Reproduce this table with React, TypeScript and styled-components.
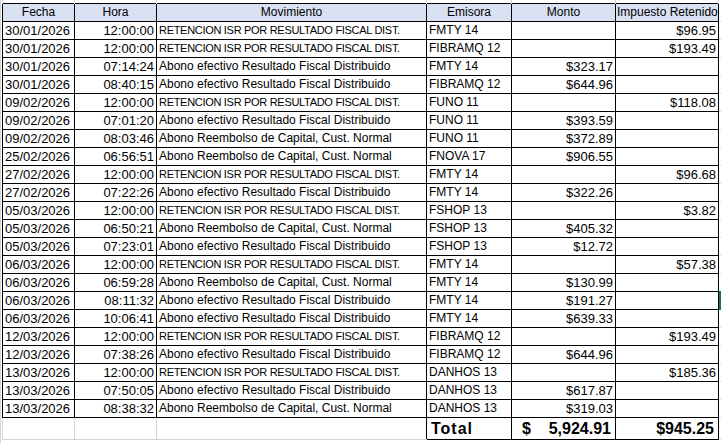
import React from "react";
import styled, { createGlobalStyle } from "styled-components";

const Global = createGlobalStyle`
  html, body { margin: 0; padding: 0; background: #ffffff; }
  body { font-family: "Liberation Sans", Arial, sans-serif; color: #000; }
`;

const Wrapper = styled.div`
  width: 721px;
  height: 443px;
  overflow: hidden;
  border-left: 1px solid #d4d4d4;
  padding-left: 1px;
  box-sizing: border-box;
`;

const Sheet = styled.table`
  border-collapse: collapse;
  table-layout: fixed;
  width: 800px;
`;

const SpacerCell = styled.td`
  height: 3px;
  padding: 0;
  font-size: 0;
  line-height: 0;
  border-left: 1px solid #d4d4d4;
  border-right: 1px solid #d4d4d4;
`;

const HeadCell = styled.th`
  height: 17px;
  padding: 0 1px;
  background: #d9e1f2;
  border: 1px solid #000;
  font-weight: normal;
  font-size: 12px;
  text-align: center;
  white-space: nowrap;
  overflow: hidden;
  line-height: 17px;
`;

const Cell = styled.td<{ $align?: "left" | "right"; $size?: number; $caps?: boolean }>`
  height: 17px;
  padding: 0 2px;
  border: 1px solid #000;
  font-size: ${(p) => (p.$caps ? 11 : p.$size ?? 12)}px;
  letter-spacing: ${(p) => (p.$caps ? "-0.3px" : "normal")};
  text-align: ${(p) => p.$align ?? "left"};
  white-space: nowrap;
  overflow: hidden;
  line-height: 17px;
`;

const BlankCell = styled.td<{ $noRight?: boolean }>`
  height: 21px;
  padding: 0;
  border-left: 1px solid #d4d4d4;
  border-bottom: 1px solid #d4d4d4;
  border-right: ${(p) => (p.$noRight ? "none" : "1px solid #d4d4d4")};
`;

const OuterCell = styled.td`
  padding: 0;
  border-top: none;
  border-bottom: 1px solid #d4d4d4;
  position: relative;
`;

const TotalCell = styled.td<{ $align?: "left" | "right"; $spaced?: boolean }>`
  height: 21px;
  padding: 0 4px;
  border: 1px solid #000;
  font-size: 16px;
  font-weight: bold;
  letter-spacing: ${(p) => (p.$spaced ? "1px" : "normal")};
  text-align: ${(p) => p.$align ?? "left"};
  white-space: nowrap;
  line-height: 21px;
`;

const Accounting = styled.div`
  display: flex;
  justify-content: space-between;
  padding-left: 6px;
`;

const Selection = styled.div`
  position: absolute;
  left: 0;
  top: -1px;
  bottom: -1px;
  width: 2px;
  background: #217346;
`;

type Row = [string, string, string, string, string, string];

const RET = "RETENCION ISR POR RESULTADO FISCAL DIST.";
const EFE = "Abono efectivo Resultado Fiscal Distribuido";
const REE = "Abono Reembolso de Capital, Cust. Normal";

const rows: Row[] = [
  ["30/01/2026", "12:00:00", RET, "FMTY 14", "", "$96.95"],
  ["30/01/2026", "12:00:00", RET, "FIBRAMQ 12", "", "$193.49"],
  ["30/01/2026", "07:14:24", EFE, "FMTY 14", "$323.17", ""],
  ["30/01/2026", "08:40:15", EFE, "FIBRAMQ 12", "$644.96", ""],
  ["09/02/2026", "12:00:00", RET, "FUNO 11", "", "$118.08"],
  ["09/02/2026", "07:01:20", EFE, "FUNO 11", "$393.59", ""],
  ["09/02/2026", "08:03:46", REE, "FUNO 11", "$372.89", ""],
  ["25/02/2026", "06:56:51", REE, "FNOVA 17", "$906.55", ""],
  ["27/02/2026", "12:00:00", RET, "FMTY 14", "", "$96.68"],
  ["27/02/2026", "07:22:26", EFE, "FMTY 14", "$322.26", ""],
  ["05/03/2026", "12:00:00", RET, "FSHOP 13", "", "$3.82"],
  ["05/03/2026", "06:50:21", REE, "FSHOP 13", "$405.32", ""],
  ["05/03/2026", "07:23:01", EFE, "FSHOP 13", "$12.72", ""],
  ["06/03/2026", "12:00:00", RET, "FMTY 14", "", "$57.38"],
  ["06/03/2026", "06:59:28", REE, "FMTY 14", "$130.99", ""],
  ["06/03/2026", "08:11:32", EFE, "FMTY 14", "$191.27", ""],
  ["06/03/2026", "10:06:41", EFE, "FMTY 14", "$639.33", ""],
  ["12/03/2026", "12:00:00", RET, "FIBRAMQ 12", "", "$193.49"],
  ["12/03/2026", "07:38:26", EFE, "FIBRAMQ 12", "$644.96", ""],
  ["13/03/2026", "12:00:00", RET, "DANHOS 13", "", "$185.36"],
  ["13/03/2026", "07:50:05", EFE, "DANHOS 13", "$617.87", ""],
  ["13/03/2026", "08:38:32", REE, "DANHOS 13", "$319.03", ""],
];

const widths = [72, 82, 270, 85, 104, 103, 84];

export default function App() {
  return (
    <>
      <Global />
      <Wrapper>
        <Sheet>
          <colgroup>
            {widths.map((w, i) => (
              <col key={i} style={{ width: w }} />
            ))}
          </colgroup>
          <tbody>
            <tr>
              {widths.map((_, i) => (
                <SpacerCell key={i} />
              ))}
            </tr>
            <tr>
              <HeadCell>Fecha</HeadCell>
              <HeadCell>Hora</HeadCell>
              <HeadCell>Movimiento</HeadCell>
              <HeadCell>Emisora</HeadCell>
              <HeadCell>Monto</HeadCell>
              <HeadCell>Impuesto Retenido</HeadCell>
              <OuterCell />
            </tr>
            {rows.map((r, i) => (
              <tr key={i}>
                <Cell $size={13}>{r[0]}</Cell>
                <Cell $align="right" $size={13}>{r[1]}</Cell>
                <Cell $caps={r[2] === RET}>{r[2]}</Cell>
                <Cell>{r[3]}</Cell>
                <Cell $align="right" $size={13}>{r[4]}</Cell>
                <Cell $align="right" $size={13}>{r[5]}</Cell>
                <OuterCell>{i === 15 ? <Selection /> : null}</OuterCell>
              </tr>
            ))}
            <tr>
              <BlankCell />
              <BlankCell />
              <BlankCell $noRight />
              <TotalCell $spaced>Total</TotalCell>
              <TotalCell>
                <Accounting>
                  <span>$</span>
                  <span>5,924.91</span>
                </Accounting>
              </TotalCell>
              <TotalCell $align="right">$945.25</TotalCell>
              <OuterCell />
            </tr>
          </tbody>
        </Sheet>
      </Wrapper>
    </>
  );
}
